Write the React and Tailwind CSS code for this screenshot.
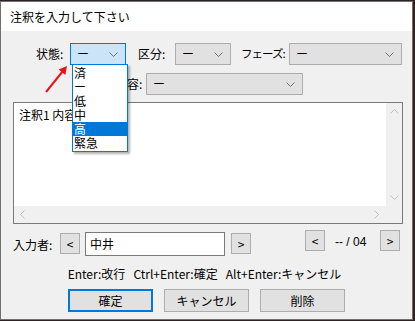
import React from 'react';

const font = { fontFamily: '"Noto Sans CJK JP", "Noto Sans", sans-serif' };

function Chevron({ className = '' }) {
  return (
    <svg width="9" height="5" viewBox="0 0 9 5" className={className}>
      <path d="M0.5 0.5 L4.5 4.5 L8.5 0.5" fill="none" stroke="currentColor" strokeWidth="1" />
    </svg>
  );
}

function Select({ width, value = 'ー', active = false }) {
  return (
    <div
      className={`shrink-0 flex items-center justify-between h-[22px] pl-[6px] pr-[7px] border ${
        active ? 'bg-[#cce4f7] border-[#0078d7]' : 'bg-[#e1e1e1] border-[#adadad]'
      }`}
      style={{ width }}
    >
      <span className="text-[12px] leading-none text-black">{value}</span>
      <Chevron className="text-[#707070]" />
    </div>
  );
}

function SmallBtn({ children }) {
  return (
    <div className="shrink-0 w-[20px] h-[21px] flex items-center justify-center bg-[#e1e1e1] border border-[#adadad] text-[12px] text-black leading-none">
      {children}
    </div>
  );
}

function Btn({ children, primary = false }) {
  return (
    <div
      className={`w-[85px] h-[23px] flex items-center justify-center bg-[#e1e1e1] text-[12px] text-black ${
        primary ? 'border-2 border-[#0078d7]' : 'border border-[#adadad]'
      }`}
    >
      {children}
    </div>
  );
}

export default function App() {
  const items = ['済', 'ー', '低', '中', '高', '緊急'];
  return (
    <div className="w-[415px] h-[321px] bg-[#2e2222] pt-[1px]" style={font}>
      <div className="relative w-[413px] h-[319px] border border-[#707070] bg-[#f0f0f0] flex flex-col">
        {/* title bar */}
        <div className="h-[29px] bg-white flex items-center pl-[9px] text-[12px] text-black">
          注釈を入力して下さい
        </div>

        {/* row 1 */}
        <div className="flex items-center mt-[12px] h-[22px] text-[12px] text-black whitespace-nowrap">
          <span className="ml-[35px] w-[34px] shrink-0">状態:</span>
          <Select width={56} active />
          <span className="ml-[12px] w-[37px] shrink-0">区分:</span>
          <Select width={56} />
          <span className="ml-[10px] w-[48px] shrink-0 text-[11.5px] tracking-[-1px]">フェーズ:</span>
          <Select width={113} />
        </div>

        {/* row 2 */}
        <div className="flex items-center mt-[8px] h-[22px] text-[12px] text-black whitespace-nowrap">
          <span className="ml-[114px] w-[31px] shrink-0">内容:</span>
          <Select width={157} />
        </div>

        {/* text area */}
        <div className="mt-[7px] ml-[12px] w-[390px] h-[122px] border border-[#7a7a7a] flex flex-col">
          <div className="flex flex-1">
            <div className="flex-1 bg-white pl-[5px] pt-[4px] text-[12px] text-black leading-[16px]">
              注釈1 内容
            </div>
            <div className="w-[16px] bg-[#f0f0f0] flex flex-col items-center justify-between py-[6px]">
              <Chevron className="text-[#c0c0c0] rotate-180" />
              <Chevron className="text-[#c0c0c0]" />
            </div>
          </div>
          <div className="h-[17px] bg-[#f0f0f0] flex items-center justify-between pl-[6px] pr-[23px]">
            <svg width="5" height="9" viewBox="0 0 5 9"><path d="M4.5 0.5 L0.5 4.5 L4.5 8.5" fill="none" stroke="#c0c0c0" /></svg>
            <svg width="5" height="9" viewBox="0 0 5 9"><path d="M0.5 0.5 L4.5 4.5 L0.5 8.5" fill="none" stroke="#c0c0c0" /></svg>
          </div>
        </div>

        {/* input row */}
        <div className="flex items-start mt-[6px] text-[12px] text-black whitespace-nowrap">
          <span className="ml-[12px] mt-[6px] w-[47px] shrink-0">入力者:</span>
          <div className="mt-[3px]"><SmallBtn>&lt;</SmallBtn></div>
          <div className="ml-[5px] w-[140px] h-[24px] bg-white border border-[#7a7a7a] flex items-center pl-[4px] mt-[2px]">
            中井
          </div>
          <div className="ml-[6px] mt-[3px]"><SmallBtn>&gt;</SmallBtn></div>
          <div className="ml-[54px]"><SmallBtn>&lt;</SmallBtn></div>
          <span className="ml-[10px] mt-[3px] w-[45px] shrink-0" style={{ fontFamily: '"Liberation Sans", sans-serif' }}>--&nbsp;/ 04</span>
          <SmallBtn>&gt;</SmallBtn>
        </div>

        {/* hint */}
        <div className="mt-[9px] flex justify-center pr-[4px] text-[12px] text-black whitespace-nowrap">
          <span>Enter:改行&nbsp;&nbsp;&nbsp;Ctrl+Enter:確定&nbsp;&nbsp;&nbsp;Alt+Enter:キャンセル</span>
        </div>

        {/* buttons */}
        <div className="mt-[6px] flex gap-[11px] ml-[67px]">
          <Btn primary>確定</Btn>
          <Btn>キャンセル</Btn>
          <Btn>削除</Btn>
        </div>

        {/* dropdown list */}
        <div className="absolute left-[71px] top-[62px] w-[56px] bg-white border border-[#0078d7] shadow-[2px_2px_2px_rgba(0,0,0,0.3)] py-[1px]">
          {items.map((it) => (
            <div
              key={it}
              className={`h-[14px] flex items-center leading-none pl-[1px] text-[12px] ${
                it === '高' ? 'bg-[#0078d7] text-white' : 'text-black'
              }`}
            >
              {it}
            </div>
          ))}
        </div>

        {/* red arrow */}
        <svg className="absolute left-[40px] top-[60px]" width="30" height="34" viewBox="0 0 30 34">
          <line x1="5" y1="30" x2="22" y2="9" stroke="#e8121a" strokeWidth="2" />
          <path d="M26 4 L24.3 12.9 L17.7 7.5 Z" fill="#e8121a" />
        </svg>
      </div>
    </div>
  );
}
